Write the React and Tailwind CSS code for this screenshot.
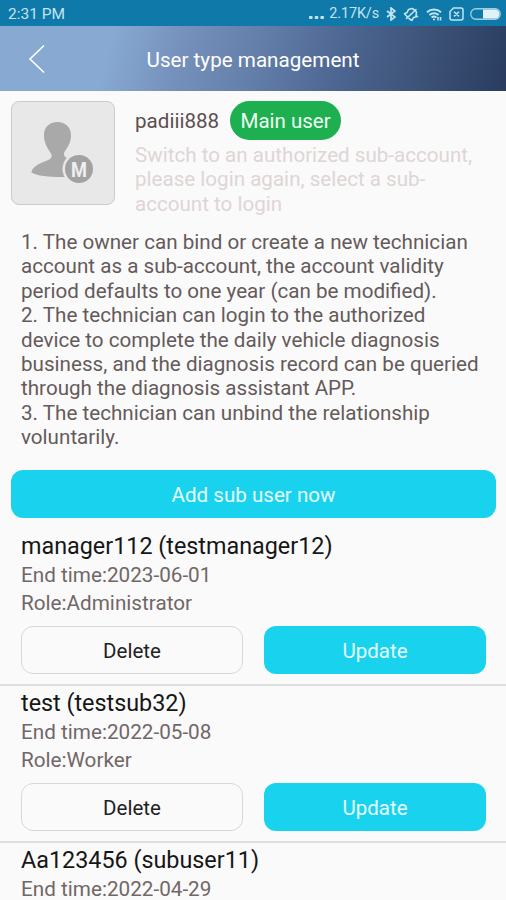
const users = [
  { name: "manager112 (testmanager12)", endTime: "2023-06-01", role: "Administrator" },
  { name: "test (testsub32)", endTime: "2022-05-08", role: "Worker" },
  { name: "Aa123456 (subuser11)", endTime: "2022-04-29" },
];

function StatusBar() {
  return (
    <div className="flex h-[26px] shrink-0 items-center justify-between bg-[#0f79a9] pt-[2px] pr-[5px] pl-[8px] text-[#c3e4f2]">
      <span className="pt-px text-[15.5px] leading-none">2:31 PM</span>
      <div className="flex items-center">
        <svg className="mt-[6px] mr-[5px] h-[3px] w-[15px]" viewBox="0 0 15 3" fill="currentColor">
          <rect width="3.6" height="3" rx="1" />
          <rect x="5.7" width="3.6" height="3" rx="1" />
          <rect x="11.4" width="3.6" height="3" rx="1" />
        </svg>
        <span className="mr-[7px] text-[14.4px] leading-none tracking-[-0.1px]">2.17K/s</span>
        {/* bluetooth */}
        <svg className="mr-[7px] h-[14px] w-[10px]" viewBox="0 0 10 14" fill="none" stroke="currentColor" strokeWidth="1.7">
          <path d="M1 4l8 6-4 3V1l4 3-8 6" />
        </svg>
        {/* muted bell */}
        <svg className="mr-[7px] h-[15px] w-[16px]" viewBox="0 0 16 15" fill="none" stroke="currentColor" strokeWidth="1.6" strokeLinecap="round" strokeLinejoin="round">
          <path d="M4 9.5L1.5 6.8 4 5.5 5.5 2.6 9 1.5 11 2.5 13.500 5 13 8.500 14.5 9.500 10.500 10.500 9 13.500 6 11.500M3.500 11.500L13 2.500" />
        </svg>
        {/* wifi */}
        <svg className="mr-[7px] h-[13px] w-[16px]" viewBox="0 0 16 13" fill="none" stroke="currentColor" strokeWidth="2">
          <path d="M1 4.2C5 .6 11 .6 15 4.2M3.4 7C6 4.7 10 4.7 12.6 7M5.6 9.5c1.4-1.2 3.4-1.2 4.8 0" />
          <path d="M7 11.5h2M12 9v3.5M14.5 9v3.5" strokeWidth="1.6" />
        </svg>
        {/* no sim */}
        <svg className="mr-[6px] h-[14px] w-[15px]" viewBox="0 0 15 14" fill="none" stroke="currentColor" strokeWidth="1.5">
          <path d="M4.5 1H12a2 2 0 012 2v8a2 2 0 01-2 2H3a2 2 0 01-2-2V4.5zM5 4.8l5 4.6M10 4.8L5 9.4" />
        </svg>
        {/* battery */}
        <svg className="h-[12px] w-[31px]" viewBox="0 0 31 12">
          <rect x=".75" y=".75" width="29.5" height="10.5" rx="5.2" fill="none" stroke="currentColor" strokeWidth="1.3" opacity=".8" />
          <path d="M13 1.5h12a4.5 4.5 0 010 9H13z" fill="#e0f1f8" />
        </svg>
      </div>
    </div>
  );
}

function Header() {
  return (
    <div className="relative flex h-[65px] shrink-0 items-center justify-center bg-[linear-gradient(105deg,#87a9d2_0%,#87a9d2_22%,#7590bb_36%,#647fa9_50%,#4b6590_68%,#3d5277_83%,#293c60_100%)] pt-[4px] text-[20.65px] text-white">
      <svg className="absolute top-[18px] left-[28px] h-[30px] w-[18px]" viewBox="0 0 18 30" fill="none" stroke="white" strokeWidth="1.6">
        <path d="M16 1.5L2 15l14 13.5" />
      </svg>
      User type management
    </div>
  );
}

function Avatar() {
  return (
    <div className="h-[104px] w-[104px] shrink-0 rounded-[8px] border border-[#cbcbcb] bg-[#e8e8e8]">
      <svg viewBox="0 0 102 102" className="h-full w-full">
        <path
          d="M45.5 20C37 20 32 25.500 32 33c0 7.500 3 12.500 6 17 2 3 2.500 5 0 7-5 3-18 6-18.500 13.500 6 3.500 17 4.500 30 4.500h9V57c-6-1-8-4-5.500-8C56.500 44 59 40 59 33c0-7.500-5.500-13-13.500-13z"
          fill="#a9a9a9"
        />
        <circle cx="67" cy="67" r="16.5" fill="#e8e8e8" />
        <circle cx="67" cy="67" r="14" fill="#a2a2a2" />
        <text x="67" y="74.5" textAnchor="middle" fontSize="21" fontWeight="700" fill="#efefef" textLength="16" lengthAdjust="spacingAndGlyphs">
          M
        </text>
      </svg>
    </div>
  );
}

function UserItem({ user }) {
  return (
    <div className="h-[157px] shrink-0 border-b-2 border-[#dedede] px-[21px] pt-[3px] last:h-auto last:border-b-0">
      <h2 className="text-[23.35px] leading-[28px] text-[#161616]">{user.name}</h2>
      <p className="mt-[4px] text-[20.7px] leading-[22px] text-[#716767]">End time:{user.endTime}</p>
      {user.role && (
        <>
          <p className="mt-[6px] text-[20.7px] leading-[22px] text-[#716767]">Role:{user.role}</p>
          <div className="mt-[12px] mr-[-1px] grid grid-cols-2 gap-[21px] text-[20.5px]">
            <button className="h-[48px] rounded-[12px] border border-[#d8d8d8] pt-[2px] text-[#222]">Delete</button>
            <button className="h-[48px] rounded-[12px] bg-[#19d3ee] pt-[2px] text-[#e6fbff]">Update</button>
          </div>
        </>
      )}
    </div>
  );
}

export default function App() {
  return (
    <div className="flex h-[900px] w-[506px] flex-col overflow-hidden bg-[#fafafa] font-[Roboto,sans-serif]">
      <StatusBar />
      <Header />
      <div className="flex h-[139px] shrink-0 gap-[20px] pt-[10px] pl-[11px]">
        <Avatar />
        <div className="min-w-0 flex-1">
          <div className="flex items-center gap-[11px]">
            <span className="pt-[2px] text-[20.6px] text-[#5b4f4f]">padiii888</span>
            <span className="flex h-[39px] w-[111px] items-center justify-center rounded-full bg-[#1daf50] pt-[2px] text-[20.5px] text-[#effff2]">
              Main user
            </span>
          </div>
          <p className="mt-[3px] text-[20.6px] leading-[24.4px] whitespace-nowrap text-[#dfd5d5]">
            Switch to an authorized sub-account,
            <br />
            please login again, select a sub-
            <br />
            account to login
          </p>
        </div>
      </div>
      <div className="h-[240px] shrink-0 pl-[21px] text-[20.63px] leading-[24.4px] whitespace-nowrap text-[#655a5a]">
        <p>
          1. The owner can bind or create a new technician
          <br />
          account as a sub-account, the account validity
          <br />
          period defaults to one year (can be modified).
        </p>
        <p>
          2. The technician can login to the authorized
          <br />
          device to complete the daily vehicle diagnosis
          <br />
          business, and the diagnosis record can be queried
          <br />
          through the diagnosis assistant APP.
        </p>
        <p>
          3. The technician can unbind the relationship
          <br />
          voluntarily.
        </p>
      </div>
      <button className="mr-[10px] ml-[11px] h-[48px] shrink-0 rounded-[12px] bg-[#19d3ee] pt-[2px] text-[20.6px] text-[#e6fbff]">
        Add sub user now
      </button>
      <div className="flex flex-col pt-[11px]">
        {users.map((user) => (
          <UserItem key={user.name} user={user} />
        ))}
      </div>
    </div>
  );
}
